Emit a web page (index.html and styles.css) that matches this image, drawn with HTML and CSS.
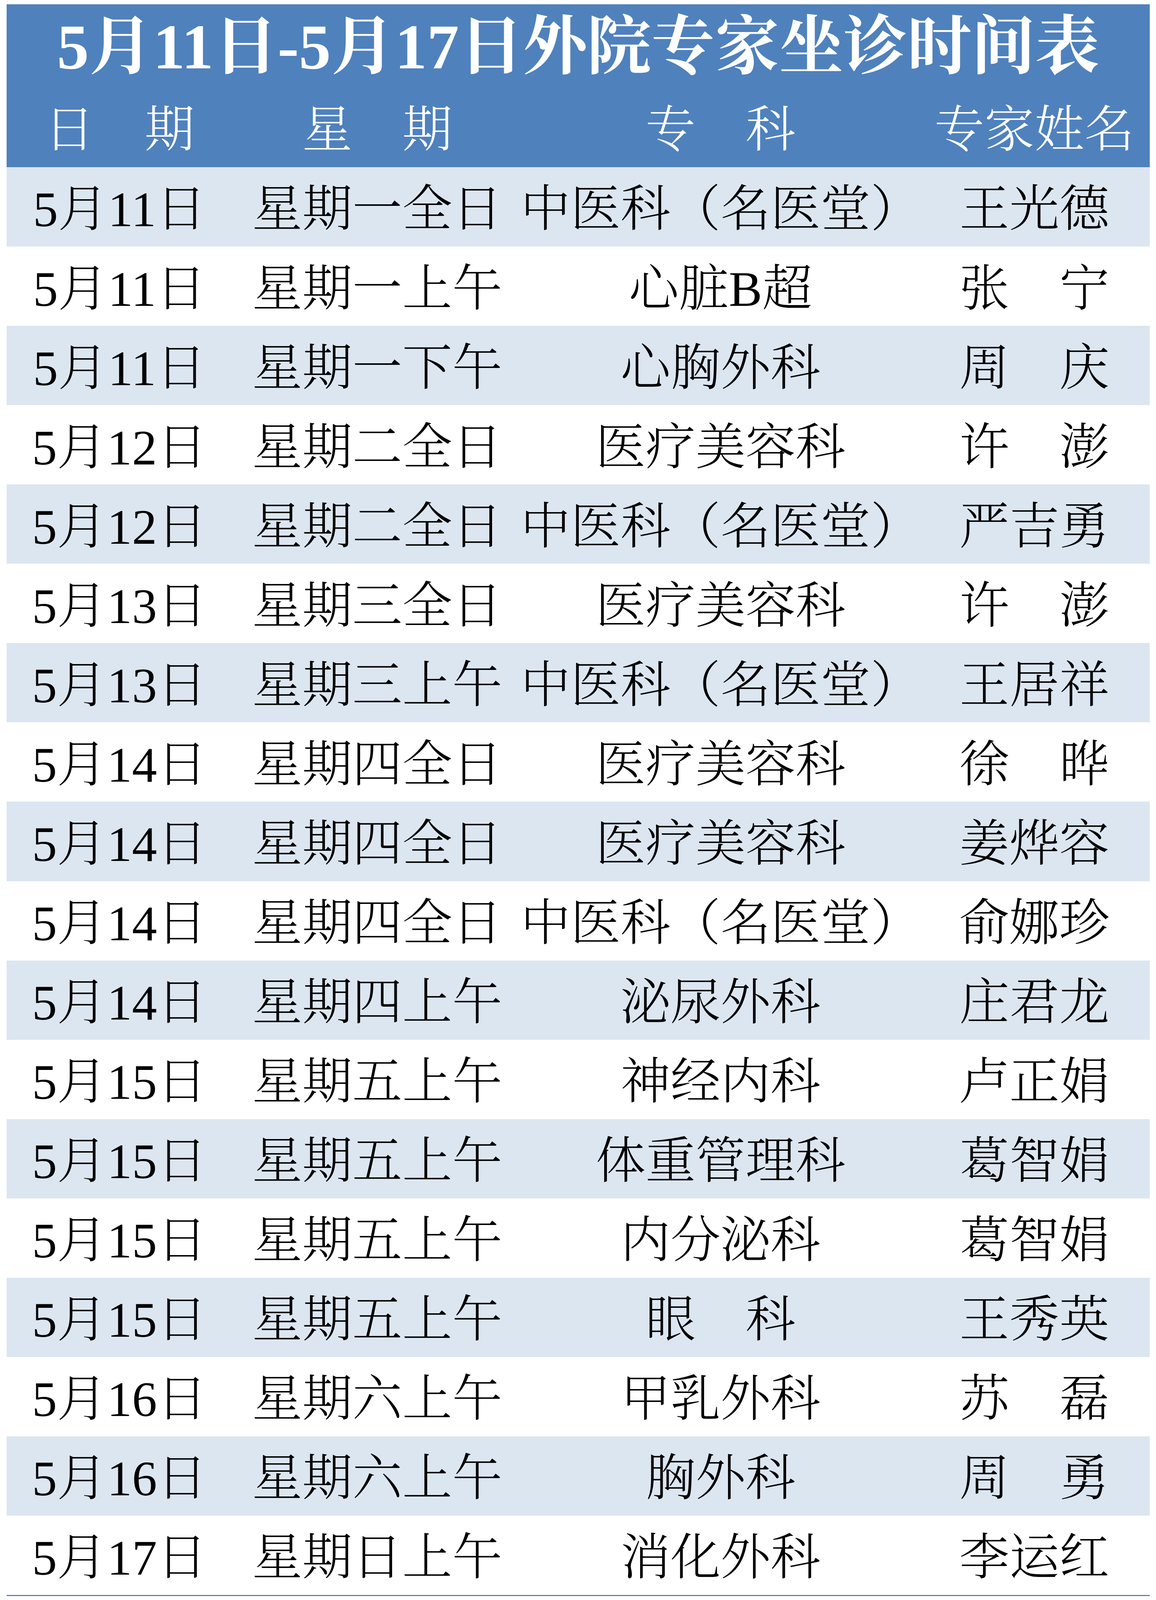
FILE: index.html
```html
<!DOCTYPE html>
<html lang="zh-CN">
<head>
<meta charset="utf-8">
<title>5月11日-5月17日外院专家坐诊时间表</title>
<link rel="stylesheet" href="styles.css">
</head>
<body>
<div class="sheet">
  <div class="head">
    <div class="title">5月11日-5月17日外院专家坐诊时间表</div>
    <div class="row cols">
      <div class="cell">日　期</div>
      <div class="cell">星　期</div>
      <div class="cell">专　科</div>
      <div class="cell">专家姓名</div>
    </div>
  </div>
  <div class="body">
    <div class="row data"><div class="cell">5月11日</div><div class="cell">星期一全日</div><div class="cell">中医科（名医堂）</div><div class="cell">王光德</div></div>
    <div class="row data"><div class="cell">5月11日</div><div class="cell">星期一上午</div><div class="cell">心脏B超</div><div class="cell">张　宁</div></div>
    <div class="row data"><div class="cell">5月11日</div><div class="cell">星期一下午</div><div class="cell">心胸外科</div><div class="cell">周　庆</div></div>
    <div class="row data"><div class="cell">5月12日</div><div class="cell">星期二全日</div><div class="cell">医疗美容科</div><div class="cell">许　澎</div></div>
    <div class="row data"><div class="cell">5月12日</div><div class="cell">星期二全日</div><div class="cell">中医科（名医堂）</div><div class="cell">严吉勇</div></div>
    <div class="row data"><div class="cell">5月13日</div><div class="cell">星期三全日</div><div class="cell">医疗美容科</div><div class="cell">许　澎</div></div>
    <div class="row data"><div class="cell">5月13日</div><div class="cell">星期三上午</div><div class="cell">中医科（名医堂）</div><div class="cell">王居祥</div></div>
    <div class="row data"><div class="cell">5月14日</div><div class="cell">星期四全日</div><div class="cell">医疗美容科</div><div class="cell">徐　晔</div></div>
    <div class="row data"><div class="cell">5月14日</div><div class="cell">星期四全日</div><div class="cell">医疗美容科</div><div class="cell">姜烨容</div></div>
    <div class="row data"><div class="cell">5月14日</div><div class="cell">星期四全日</div><div class="cell">中医科（名医堂）</div><div class="cell">俞娜珍</div></div>
    <div class="row data"><div class="cell">5月14日</div><div class="cell">星期四上午</div><div class="cell">泌尿外科</div><div class="cell">庄君龙</div></div>
    <div class="row data"><div class="cell">5月15日</div><div class="cell">星期五上午</div><div class="cell">神经内科</div><div class="cell">卢正娟</div></div>
    <div class="row data"><div class="cell">5月15日</div><div class="cell">星期五上午</div><div class="cell">体重管理科</div><div class="cell">葛智娟</div></div>
    <div class="row data"><div class="cell">5月15日</div><div class="cell">星期五上午</div><div class="cell">内分泌科</div><div class="cell">葛智娟</div></div>
    <div class="row data"><div class="cell">5月15日</div><div class="cell">星期五上午</div><div class="cell">眼　科</div><div class="cell">王秀英</div></div>
    <div class="row data"><div class="cell">5月16日</div><div class="cell">星期六上午</div><div class="cell">甲乳外科</div><div class="cell">苏　磊</div></div>
    <div class="row data"><div class="cell">5月16日</div><div class="cell">星期六上午</div><div class="cell">胸外科</div><div class="cell">周　勇</div></div>
    <div class="row data"><div class="cell">5月17日</div><div class="cell">星期日上午</div><div class="cell">消化外科</div><div class="cell">李运红</div></div>
  </div>
</div>
</body>
</html>
```

FILE: styles.css
```css
html, body {
  margin: 0;
  padding: 0;
  background: #ffffff;
}

body {
  font-family: "Liberation Serif", "Noto Serif CJK SC", "Noto Sans CJK SC", serif;
}

/* Vertical sizes are fractions of the 5366px-tall frame so the whole
   table always fits the window height. */
.sheet {
  width: 2927px;
  margin: 0.28vh 0 0 17px;
  border-bottom: 3px solid #5f84b9;
}

.head {
  background: #4f81bd;
  color: #ffffff;
}

.title {
  height: 5.218vh;
  box-sizing: border-box;
  padding-top: 0.1vh;
  display: flex;
  align-items: center;
  justify-content: center;
  font-size: 164px;
  font-weight: bold;
  line-height: 1;
  white-space: nowrap;
}

.row {
  display: grid;
  grid-template-columns: 578px 742px 1016px 591px;
  height: 4.957vh;
}

.cell {
  display: flex;
  align-items: center;
  justify-content: center;
  box-sizing: border-box;
  padding-top: 0.33vh;
  font-size: 128px;
  font-weight: 300;
  line-height: 1;
  white-space: nowrap;
}

.data {
  color: #000000;
  background: #ffffff;
}

.data:nth-child(odd) {
  background: #dce6f1;
}
```
